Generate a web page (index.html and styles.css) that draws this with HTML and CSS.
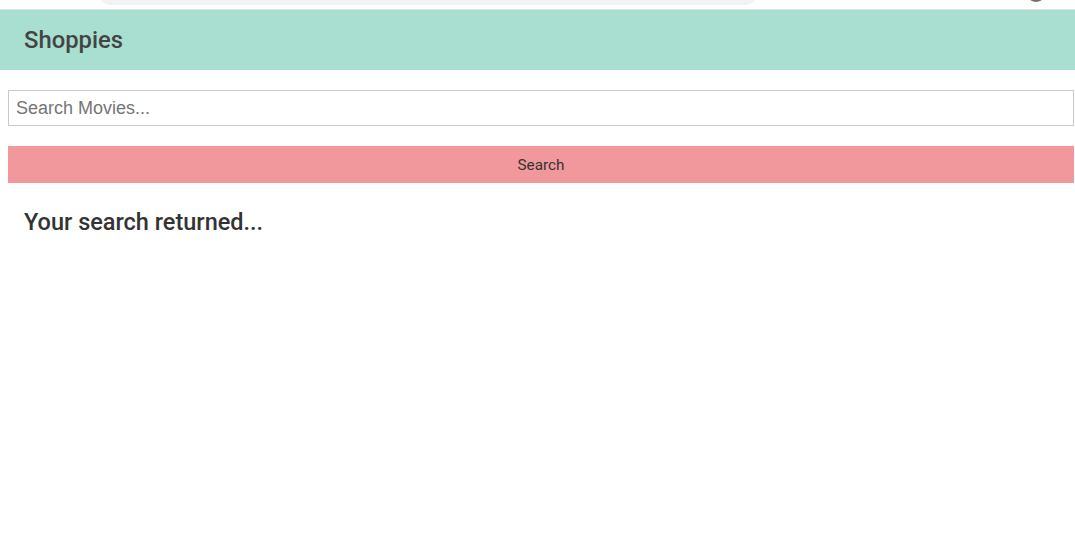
FILE: index.html
```html
<!DOCTYPE html>
<html>
<head>
<meta charset="utf-8">
<link rel="stylesheet" href="styles.css">
</head>
<body>
<div class="chrome">
  <div class="pill"></div>
  <div class="avatar"></div>
</div>
<header class="topbar"><h1 class="brand">Shoppies</h1></header>
<main class="content">
  <input class="search-input" type="text" placeholder="Search Movies...">
  <button class="search-btn">Search</button>
  <h2 class="results-title">Your search returned...</h2>
</main>
</body>
</html>
```
FILE: styles.css
```css
html, body { margin: 0; padding: 0; background: #fff; }
body { font-family: Roboto, "Liberation Sans", sans-serif; }
.chrome {
  height: 9px;
  border-bottom: 1px solid #e2dede;
  position: relative;
  background: #fff;
}
.pill {
  position: absolute;
  left: 100px;
  top: -10px;
  width: 656px;
  height: 15px;
  background: #f1f2f4;
  border-radius: 0 0 10px 10px;
}
.avatar {
  position: absolute;
  left: 1029px;
  top: -8px;
  width: 14px;
  height: 10px;
  border-radius: 50%;
  background: #7a7066;
}
.topbar {
  height: 60px;
  background: #a8dfd0;
  display: flex;
  align-items: center;
  padding-left: 24px;
}
.brand {
  margin: 0;
  font-size: 23.8px;
  font-weight: 500;
  color: #444;
  font-family: Roboto, sans-serif;
}
.content {
  padding: 20px 1px 0 8px;
  display: flex;
  flex-direction: column;
}
.search-input {
  box-sizing: border-box;
  height: 36px;
  width: 100%;
  border: 1px solid #c9c9c9;
  padding: 0 7px;
  font-family: "Liberation Sans", Arial, sans-serif;
  font-size: 18px;
  color: #333;
  outline: none;
  margin: 0;
}
.search-input::placeholder { color: #757575; }
.search-btn {
  margin-top: 20px;
  height: 37px;
  width: 100%;
  border: none;
  background: #f1989c;
  font-family: Roboto, sans-serif;
  font-size: 15.3px;
  color: #333;
  padding: 0;
}
.results-title {
  margin: 25px 0 0 16px;
  font-size: 23.5px;
  font-weight: 500;
  color: #333;
  font-family: Roboto, sans-serif;
}
```
